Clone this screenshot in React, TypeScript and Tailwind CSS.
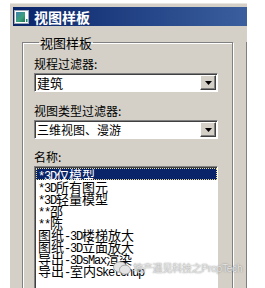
import React from 'react';

const cjk = '"Noto Sans CJK SC", "DejaVu Sans", sans-serif';
const mono = '"Liberation Mono", "DejaVu Sans Mono", monospace';

const items = [
    '*3D仅模型',
    '*3D所有图元',
    '*3D轻量模型',
    '**邵',
    '**陈',
    '图纸-3D楼梯放大',
    '图纸-3D立面放大',
    '导出-3DsMax渲染',
    '导出-室内Sketchup',
];

// split a name into ascii / cjk runs so the latin part gets a half-width mono face
function runs(text: string) {
    const parts = text.match(/[\x00-\x7f]+|[^\x00-\x7f]+/g) ?? [];
    return parts.map((p, i) =>
        /^[\x00-\x7f]/.test(p) ? (
            <span key={i} className="text-[12px] tracking-[-1.2px]" style={{ fontFamily: mono }}>
                {p}
            </span>
        ) : (
            <span key={i} className="text-[13px]" style={{ fontFamily: cjk }}>
                {p}
            </span>
        )
    );
}

function WinIcon() {
    return (
        <svg width="15" height="14" viewBox="0 0 15 14">
            <rect x="0.5" y="0.5" width="14" height="13" fill="#fff" stroke="#9aa6b8" />
            <defs>
                <linearGradient id="g" x1="0" y1="0" x2="1" y2="1">
                    <stop offset="0" stopColor="#3f7fb0" />
                    <stop offset="0.6" stopColor="#3aa27a" />
                    <stop offset="1" stopColor="#1f6f58" />
                </linearGradient>
            </defs>
            <rect x="2" y="2" width="9" height="10" fill="url(#g)" />
            <rect x="12" y="9" width="1.5" height="3" fill="#2a8a66" />
        </svg>
    );
}

function DropButton() {
    return (
        <div className="flex h-[15px] w-[16px] items-center justify-center bg-[#d4d0c8] border border-t-white border-l-white border-r-[#404040] border-b-[#404040] shadow-[inset_-1px_-1px_0_#808080]">
            <svg width="7" height="4" viewBox="0 0 7 4">
                <path d="M0 0h7L3.5 4z" fill="#000" />
            </svg>
        </div>
    );
}

function Combo({ value, size }: { value: string; size: string }) {
    return (
        <div className="flex h-[19px] w-[184px] items-center border border-t-[#808080] border-l-[#808080] border-r-white border-b-white shadow-[inset_1px_1px_0_#404040] bg-white pl-[2px] pr-[1px]">
            <span className={`flex-1 leading-[15px] text-black ${size}`} style={{ fontFamily: cjk }}>
                {value}
            </span>
            <DropButton />
        </div>
    );
}

function Label({ text }: { text: string }) {
    return (
        <div className="text-[12px] leading-[15px] text-black" style={{ fontFamily: cjk }}>
            {text}
        </div>
    );
}

export default function App() {
    return (
        <div className="relative h-[288px] w-[265px] overflow-hidden bg-white pl-[10px] pt-[3px]">
            <div className="h-[285px] w-[237px] bg-[#d4d0c8] border-t border-t-[#e8e6e1]">
                <div className="pl-[3px] pt-[3px]">
                    {/* title bar */}
                    <div className="flex h-[19px] items-center gap-[5px] bg-gradient-to-r from-[#0a246a] to-[#3b5f9e] pl-[1px]">
                        <WinIcon />
                        <span className="text-[14px] font-bold leading-[16px] text-white" style={{ fontFamily: cjk }}>
                            视图样板
                        </span>
                    </div>
                </div>

                {/* body */}
                <div className="flex h-[262px]">
                    <div className="flex-1 pl-[12px] pt-[9px]">
                        <fieldset className="h-[260px] w-[211px] border border-[#808080] shadow-[1px_1px_0_#fff,inset_1px_1px_0_#fff] pl-[11px] pt-[6px]">
                            <legend className="ml-[5px] px-[1px] text-[13px] leading-[15px] text-black" style={{ fontFamily: cjk }}>
                                视图样板
                            </legend>
                            <Label text="规程过滤器:" />
                            <div className="mt-[2px]">
                                <Combo value="建筑" size="text-[13px]" />
                            </div>
                            <div className="mt-[11px]">
                                <Label text="视图类型过滤器:" />
                            </div>
                            <div className="mt-[2px]">
                                <Combo value="三维视图、漫游" size="text-[12px]" />
                            </div>
                            <div className="mt-[10px]">
                                <Label text="名称:" />
                            </div>
                            <div className="mt-[2px] h-[130px] w-[184px] border border-t-[#808080] border-l-[#808080] border-r-white border-b-white shadow-[inset_1px_1px_0_#404040] bg-white pl-px pt-px">
                                {items.map((it, i) => (
                                    <div
                                        key={it}
                                        className={
                                            i === 0
                                                ? 'h-[12px] w-[181px] whitespace-nowrap border border-dotted border-[#e8d890] bg-[#0a246a] pl-px leading-[10px] text-white'
                                                : 'h-[12px] whitespace-nowrap pl-[2px] leading-[12px] text-black'
                                        }
                                    >
                                        {runs(it)}
                                    </div>
                                ))}
                            </div>
                        </fieldset>
                    </div>
                    <div className="mt-[16px] w-px bg-[#808080]" />
                </div>
            </div>

            {/* watermark */}
            <div className="absolute left-[113px] top-[261px] flex items-center gap-[2px] whitespace-nowrap text-[#e6e6e6] [text-shadow:0_0_1.5px_#6a6a6a]">
                <svg width="18" height="14" viewBox="0 0 18 14">
                    <ellipse cx="7" cy="6" rx="6.5" ry="5.3" fill="#e4e4e4" stroke="#8a8a8a" strokeWidth="0.7" />
                    <ellipse cx="12" cy="8.7" rx="5.5" ry="4.6" fill="#e4e4e4" stroke="#8a8a8a" strokeWidth="0.7" />
                </svg>
                <span className="text-[10px] leading-[13px] tracking-[-0.2px]" style={{ fontFamily: cjk }}>
                    地产遇见科技之
                    <span style={{ fontFamily: '"Liberation Sans", sans-serif' }}>PropTech</span>
                </span>
            </div>
        </div>
    );
}
